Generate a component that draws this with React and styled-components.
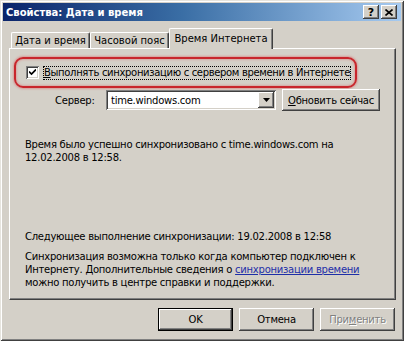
import React from 'react';
import styled, { createGlobalStyle, css } from 'styled-components';

const FONT = `'DejaVu Sans', 'Liberation Sans', sans-serif`;

const GlobalStyle = createGlobalStyle`
  html, body { margin: 0; padding: 0; background: #D4D0C8; }
  body { font-family: ${FONT}; }
  * { box-sizing: border-box; }
`;

const raised = css`
  box-shadow: inset -1px -1px 0 #404040, inset 1px 1px 0 #ffffff,
    inset -2px -2px 0 #808080, inset 2px 2px 0 #D4D0C8;
`;

const sunken = css`
  box-shadow: inset 1px 1px 0 #808080, inset -1px -1px 0 #ffffff,
    inset 2px 2px 0 #404040, inset -2px -2px 0 #D4D0C8;
`;

const Window = styled.div`
  width: 404px;
  height: 341px;
  background: #D4D0C8;
  padding: 3px;
  display: flex;
  flex-direction: column;
  font-family: ${FONT};
  font-size: 10px;
  letter-spacing: -0.25px;
  color: #000;
  box-shadow: inset 1px 1px 0 #E6E4DE, inset -1px -1px 0 #404040,
    inset 2px 2px 0 #ffffff, inset -2px -2px 0 #808080;
`;

const TitleBar = styled.div`
  height: 18px;
  flex: none;
  display: flex;
  align-items: center;
  padding: 0 4px 0 3px;
  background: linear-gradient(to right, #0A246A 0%, #3A6EA5 45%, #A6CAF0 100%);
`;

const Title = styled.div`
  flex: 1;
  color: #fff;
  font-weight: bold;
  font-size: 10px;
  letter-spacing: 0;
  white-space: nowrap;
`;

const TitleButton = styled.div`
  width: 16px;
  height: 14px;
  margin-left: ${(p) => (p.$gap ? '2px' : '0')};
  background: #D4D0C8;
  ${raised};
  display: flex;
  align-items: center;
  justify-content: center;
  font-weight: bold;
  font-size: 11px;
  letter-spacing: 0;
  line-height: 1;
  color: #000;
`;

const Body = styled.div`
  flex: 1;
  display: flex;
  flex-direction: column;
  padding: 7px 5px 0 6px;
`;

const TabRow = styled.div`
  height: 20px;
  display: flex;
  align-items: flex-end;
  padding-left: 2px;
  position: relative;
  z-index: 1;
`;

const Tab = styled.div`
  width: ${(p) => p.$w}px;
  height: ${(p) => (p.$active ? 21 : 16)}px;
  margin-bottom: ${(p) => (p.$active ? -1 : 0)}px;
  background: #D4D0C8;
  border-top: 1px solid #fff;
  border-left: 1px solid #fff;
  border-right: 1px solid #404040;
  border-radius: 2px 2px 0 0;
  box-shadow: inset -1px 0 0 #808080;
  display: flex;
  align-items: ${(p) => (p.$active ? 'flex-start' : 'center')};
  justify-content: center;
  padding-top: ${(p) => (p.$active ? 4 : 0)}px;
  white-space: nowrap;
  font-size: 10px;
  letter-spacing: 0;
`;

const Panel = styled.div`
  height: 252px;
  flex: none;
  background: #D4D0C8;
  border-top: 1px solid #fff;
  border-left: 1px solid #fff;
  border-right: 1px solid #404040;
  border-bottom: 1px solid #404040;
  box-shadow: inset -1px -1px 0 #808080;
  display: flex;
  flex-direction: column;
  padding-top: 8px;
`;

const Highlight = styled.div`
  margin-left: 4px;
  width: 343px;
  height: 31px;
  border: 2px solid #C8262C;
  border-radius: 9px;
  box-shadow: 0 0 2px 1px rgba(220, 90, 90, 0.45), inset 0 0 2px 1px rgba(220, 90, 90, 0.35);
  display: flex;
  align-items: center;
  padding-left: 10px;
`;

const CheckBox = styled.div`
  width: 13px;
  height: 13px;
  flex: none;
  background: #fff;
  ${sunken};
  display: flex;
  align-items: center;
  justify-content: center;
`;

const CheckLabel = styled.span`
  margin-left: 4px;
  padding: 1px 1px;
  outline: 1px dotted #000;
  outline-offset: -1px;
  white-space: nowrap;
  line-height: 12px;
  letter-spacing: -0.33px;
`;

const Mnemonic = styled.span`
  text-decoration: underline;
`;

const ServerRow = styled.div`
  margin-top: 1px;
  height: 22px;
  display: flex;
  align-items: center;
  padding-left: 45px;
`;

const FieldLabel = styled.span`
  width: 51px;
  flex: none;
`;

const Combo = styled.div`
  width: 170px;
  height: 20px;
  background: #fff;
  ${sunken};
  display: flex;
  align-items: center;
  padding: 2px;
`;

const ComboText = styled.span`
  flex: 1;
  padding-left: 3px;
  white-space: nowrap;
`;

const ComboArrow = styled.div`
  width: 16px;
  height: 16px;
  background: #D4D0C8;
  ${raised};
  display: flex;
  align-items: center;
  justify-content: center;
`;

const Button = styled.div`
  width: ${(p) => p.$w}px;
  height: ${(p) => p.$h || 23}px;
  flex: none;
  background: #D4D0C8;
  display: flex;
  align-items: center;
  justify-content: center;
  white-space: nowrap;
  ${(p) =>
    p.$default
      ? css`
          border: 1px solid #000;
          box-shadow: inset -1px -1px 0 #404040, inset 1px 1px 0 #ffffff,
            inset -2px -2px 0 #808080;
        `
      : raised};
  ${(p) =>
    p.$disabled &&
    css`
      color: #808080;
      text-shadow: 1px 1px 0 #ffffff;
    `}
`;

const RefreshButton = styled(Button)`
  margin-left: 6px;
`;

const Text = styled.p`
  margin: ${(p) => p.$mt}px 0 0 15px;
  line-height: 13px;
  white-space: nowrap;
`;

const Link = styled.a`
  color: #1E2FA8;
  text-decoration: underline;
`;

const Footer = styled.div`
  margin-top: 8px;
  display: flex;
  justify-content: flex-end;
  gap: 6px;
  padding-right: 1px;
`;

export default function App() {
  return (
    <>
      <GlobalStyle />
      <Window>
        <TitleBar>
          <Title>Свойства: Дата и время</Title>
          <TitleButton>?</TitleButton>
          <TitleButton $gap>
            <svg width="8" height="7" viewBox="0 0 8 7">
              <path d="M0.5 0.5 L7.5 6.5 M7.5 0.5 L0.5 6.5" stroke="#000" strokeWidth="1.6" />
            </svg>
          </TitleButton>
        </TitleBar>
        <Body>
          <TabRow>
            <Tab $w={79}>Дата и время</Tab>
            <Tab $w={79}>Часовой пояс</Tab>
            <Tab $w={104} $active>Время Интернета</Tab>
          </TabRow>
          <Panel>
            <Highlight>
              <CheckBox>
                <svg width="7" height="7" viewBox="0 0 7 7">
                  <path d="M0 2.5 L2.5 5 L7 0.5" stroke="#000" strokeWidth="1.7" fill="none" />
                </svg>
              </CheckBox>
              <CheckLabel>
                <Mnemonic>В</Mnemonic>ыполнять синхронизацию с сервером времени в Интернете
              </CheckLabel>
            </Highlight>
            <ServerRow>
              <FieldLabel>Сервер:</FieldLabel>
              <Combo>
                <ComboText>time.windows.com</ComboText>
                <ComboArrow>
                  <svg width="7" height="4" viewBox="0 0 7 4">
                    <path d="M0 0 H7 L3.5 4 Z" fill="#000" />
                  </svg>
                </ComboArrow>
              </Combo>
              <RefreshButton $w={98} $h={22}>
                <Mnemonic>О</Mnemonic>бновить сейчас
              </RefreshButton>
            </ServerRow>
            <Text $mt={27}>
              Время было успешно синхронизовано с time.windows.com на
              <br />
              12.02.2008 в 12:58.
            </Text>
            <Text $mt={66}>Следующее выполнение синхронизации: 19.02.2008 в 12:58</Text>
            <Text $mt={7}>
              Синхронизация возможна только когда компьютер подключен к
              <br />
              Интернету. Дополнительные сведения о <Link>синхронизации времени</Link>
              <br />
              можно получить в центре справки и поддержки.
            </Text>
          </Panel>
          <Footer>
            <Button $w={75} $default>OK</Button>
            <Button $w={75}>Отмена</Button>
            <Button $w={75} $disabled>
              При<Mnemonic>м</Mnemonic>енить
            </Button>
          </Footer>
        </Body>
      </Window>
    </>
  );
}
